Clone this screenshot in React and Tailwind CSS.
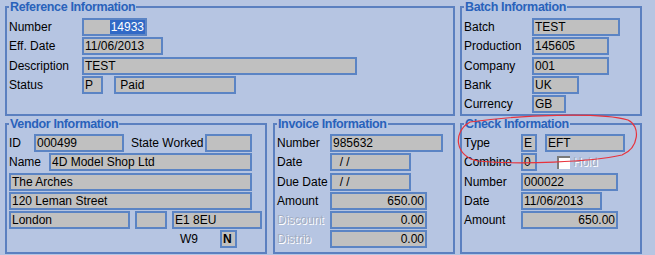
import React from 'react';

const Group = ({ title, className, children }) => (
  <fieldset className={`border-2 border-[#5b80c0] px-[2px] min-w-0 ${className}`}>
    <legend className="px-[1px] text-[12.5px] leading-[14px] font-bold text-[#2962bb] tracking-[-0.35px]">
      {title}
    </legend>
    {children}
  </fieldset>
);

const Box = ({ className = '', children }) => (
  <div className={`h-[18px] shrink-0 border-2 border-[#5b84c4] bg-[#c0c0c0] px-[1px] text-[12px] leading-[14px] text-black whitespace-pre overflow-hidden ${className}`}>
    {children}
  </div>
);

const Label = ({ className = '', disabled, children }) => (
  <span
    className={`shrink-0 text-[12px] leading-[18px] ${
      disabled ? 'text-[#a2adc3] [text-shadow:1px_1px_0_#ffffff]' : 'text-black'
    } ${className}`}
  >
    {children}
  </span>
);

const Row = ({ className = '', children }) => (
  <div className={`flex items-center h-[18px] ${className}`}>{children}</div>
);

export default function App() {
  return (
    <div className="relative w-[655px] h-[255px] bg-[#b6c5e2] pl-[5px] font-['Liberation_Sans',Arial,sans-serif] overflow-hidden">
      {/* Top row */}
      <div className="flex gap-[5px]">
        <Group title="Reference Information" className="w-[450px] h-[116px] pt-[4px]">
          <div className="flex flex-col gap-[1.25px]">
            <Row>
              <Label className="w-[73px]">Number</Label>
              <Box className="w-[65px] flex justify-end !px-0">
                <span className="bg-[#3169c6] text-white h-full px-[1px]">14933</span>
              </Box>
            </Row>
            <Row>
              <Label className="w-[73px]">Eff. Date</Label>
              <Box className="w-[81px]">11/06/2013</Box>
            </Row>
            <Row>
              <Label className="w-[73px]">Description</Label>
              <Box className="w-[275px]">TEST</Box>
            </Row>
            <Row className="gap-[11px]">
              <Label className="w-[62px]">Status</Label>
              <Box className="w-[21px]">P</Box>
              <Box className="w-[122px]"> Paid</Box>
            </Row>
          </div>
        </Group>

        <Group title="Batch Information" className="w-[182px] h-[116px] pt-[4px]">
          <div className="flex flex-col gap-[1.25px]">
            <Row>
              <Label className="w-[68px]">Batch</Label>
              <Box className="w-[88px]">TEST</Box>
            </Row>
            <Row>
              <Label className="w-[68px]">Production</Label>
              <Box className="w-[77px]">145605</Box>
            </Row>
            <Row>
              <Label className="w-[68px]">Company</Label>
              <Box className="w-[77px]">001</Box>
            </Row>
            <Row>
              <Label className="w-[68px]">Bank</Label>
              <Box className="w-[47px]">UK</Box>
            </Row>
            <Row>
              <Label className="w-[68px]">Currency</Label>
              <Box className="w-[34px]">GB</Box>
            </Row>
          </div>
        </Group>
      </div>

      {/* Bottom row */}
      <div className="flex mt-[1px]">
        <Group title="Vendor Information" className="w-[262px] h-[137px] pt-[3px]">
          <div className="flex flex-col gap-[1.25px]">
            <Row>
              <Label className="w-[25px]">ID</Label>
              <Box className="w-[90px]">000499</Box>
              <Label className="w-[81px] pl-[7px]">State Worked</Label>
              <Box className="w-[47px]"></Box>
            </Row>
            <Row>
              <Label className="w-[40px]">Name</Label>
              <Box className="w-[203px]">4D Model Shop Ltd</Box>
            </Row>
            <Row>
              <Box className="w-[243px]">The Arches</Box>
            </Row>
            <Row>
              <Box className="w-[243px]">120 Leman Street</Box>
            </Row>
            <Row className="gap-[5px]">
              <Box className="w-[121px]">London</Box>
              <Box className="w-[32px]"></Box>
              <Box className="w-[90px]">E1 8EU</Box>
            </Row>
            <Row className="pl-[171px]">
              <Label className="w-[40px]">W9</Label>
              <Box className="w-[17px] font-bold">N</Box>
            </Row>
          </div>
        </Group>

        <Group title="Invoice Information" className="w-[182px] h-[137px] pt-[3px] ml-[6px]">
          <div className="flex flex-col gap-[1.25px]">
            <Row>
              <Label className="w-[53px]">Number</Label>
              <Box className="w-[113px]">985632</Box>
            </Row>
            <Row>
              <Label className="w-[53px]">Date</Label>
              <Box className="w-[81px]">{'  / /'}</Box>
            </Row>
            <Row>
              <Label className="w-[53px]">Due Date</Label>
              <Box className="w-[81px]">{'  / /'}</Box>
            </Row>
            <Row>
              <Label className="w-[53px]">Amount</Label>
              <Box className="w-[97px] text-right">650.00</Box>
            </Row>
            <Row>
              <Label className="w-[53px]" disabled>Discount</Label>
              <Box className="w-[97px] text-right">0.00</Box>
            </Row>
            <Row>
              <Label className="w-[53px]" disabled>Distrib</Label>
              <Box className="w-[97px] text-right">0.00</Box>
            </Row>
          </div>
        </Group>

        <Group title="Check Information" className="w-[182px] h-[137px] pt-[3px] ml-[5px]">
          <div className="flex flex-col gap-[1.25px]">
            <Row>
              <Label className="w-[57px]">Type</Label>
              <Box className="w-[16px]">E</Box>
              <Box className="w-[80px] ml-[8px]">EFT</Box>
            </Row>
            <Row>
              <Label className="w-[57px]">Combine</Label>
              <Box className="w-[16px]">0</Box>
              <span className="ml-[20px] w-[13px] h-[13px] bg-white border-t-2 border-l-2 border-[#7a7a7a]" />
              <Label className="ml-[3px]" disabled>Hold</Label>
            </Row>
            <Row>
              <Label className="w-[57px]">Number</Label>
              <Box className="w-[97px]">000022</Box>
            </Row>
            <Row>
              <Label className="w-[57px]">Date</Label>
              <Box className="w-[81px]">11/06/2013</Box>
            </Row>
            <Row>
              <Label className="w-[57px]">Amount</Label>
              <Box className="w-[97px] text-right">650.00</Box>
            </Row>
          </div>
        </Group>
      </div>

      {/* hand-drawn annotation */}
      <svg className="absolute inset-0 pointer-events-none" width="655" height="255">
        <path
          d="M470 122 C520 115 600 112 628 120 C641 126 639 148 622 155 C590 162 520 165 478 161 C455 157 452 132 470 122 Z"
          fill="none"
          stroke="#e8323c"
          strokeWidth="1.2"
        />
      </svg>
    </div>
  );
}
